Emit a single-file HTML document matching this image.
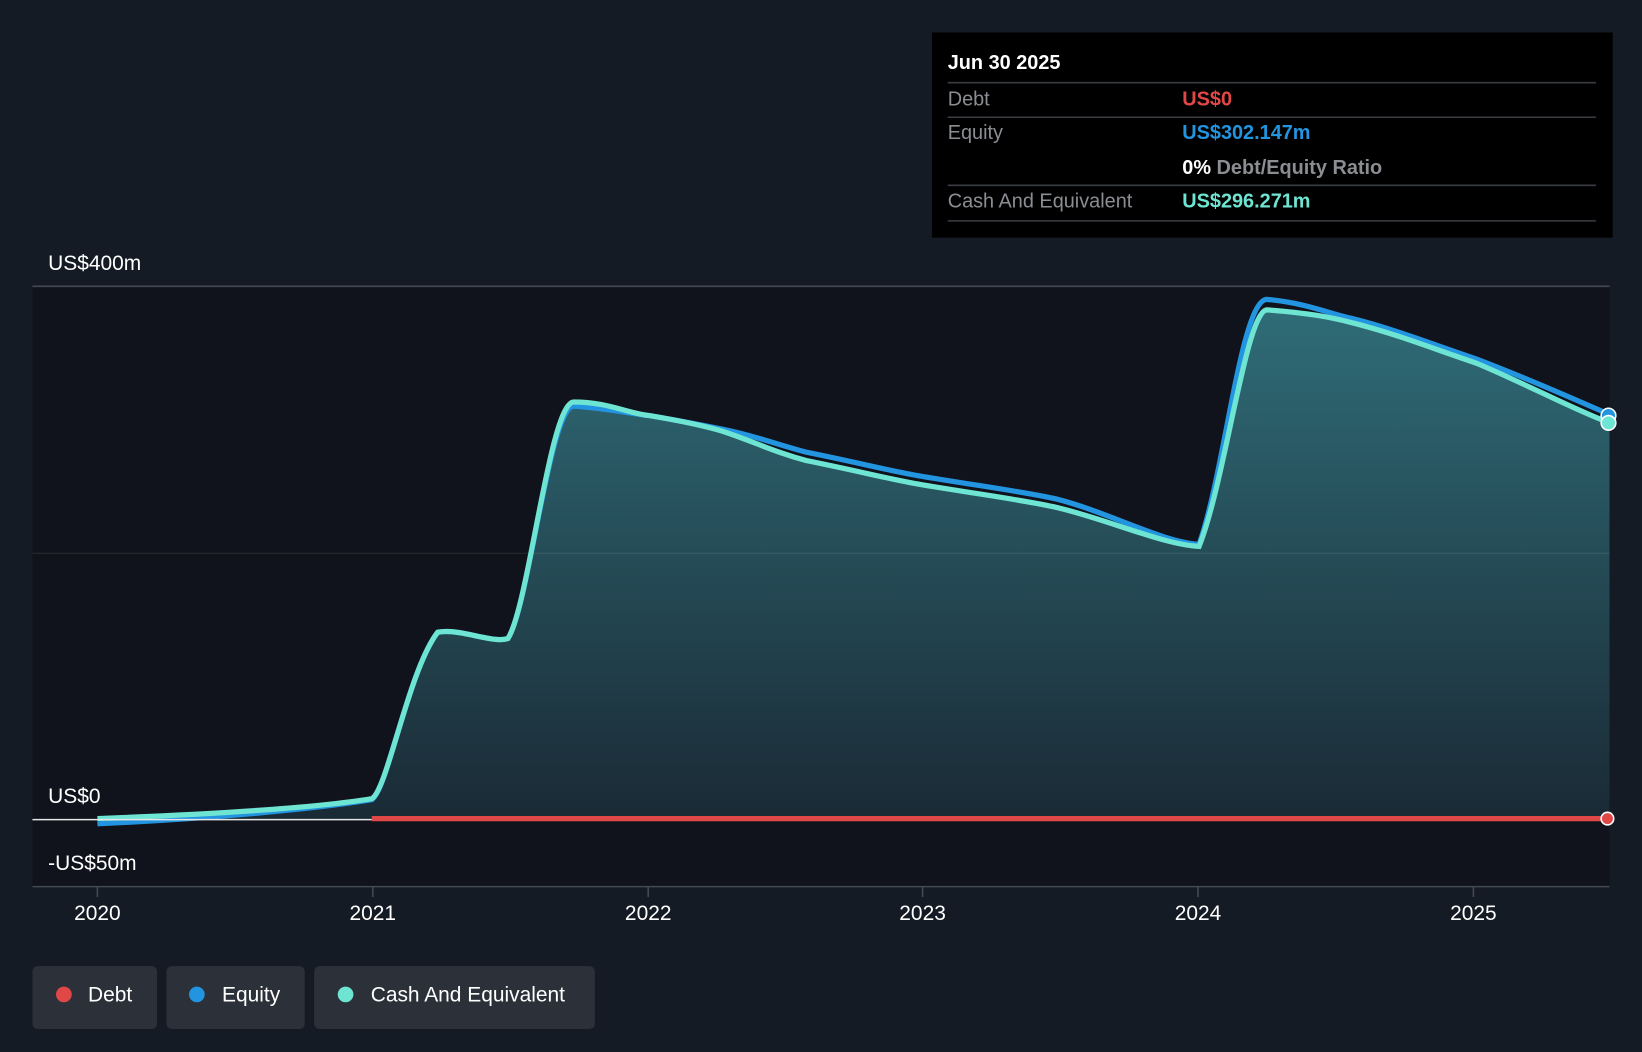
<!DOCTYPE html>
<html><head><meta charset="utf-8">
<style>
html,body{margin:0;padding:0;background:#151b24;width:1642px;height:1052px;overflow:hidden}
svg{display:block}
text{font-family:"Liberation Sans",sans-serif}
</style></head>
<body>
<svg width="1642" height="1052" viewBox="0 0 1568 1005" preserveAspectRatio="none">
<defs>
<linearGradient id="g" x1="0" y1="0" x2="0" y2="1">
<stop offset="0" stop-color="#2f6c77"/>
<stop offset="1" stop-color="#1a2a35"/>
</linearGradient>
<clipPath id="c"><rect x="31" y="250" width="1506" height="600"/></clipPath>
</defs>
<rect width="1568" height="1005" fill="#151b24"/>
<rect x="31" y="273" width="1506" height="574" fill="#10131b"/>
<line x1="31" y1="273.5" x2="1537" y2="273.5" stroke="#444a53" stroke-width="1.5"/>
<g clip-path="url(#c)">
<path d="M93 782 C200 778 300 772 355 763 C370 755 390 640 418 604 C440 600 470 615 485 610 C505 580 525 390 548 384 C580 384 600 395 620 397 C650 402 670 406 690 412 C720 422 740 432 770 440 C820 450 850 458 880 463 C940 473 980 478 1010 485 C1060 497 1110 520 1145 522 C1170 460 1190 296 1210 296 C1250 299 1270 303 1290 308 C1330 318 1360 330 1410 347 C1460 368 1500 390 1537 404 L1537 783 L93 783 Z" fill="url(#g)"/>
<line x1="31" y1="528.5" x2="1537" y2="528.5" stroke="#ffffff" stroke-opacity="0.1" stroke-width="1"/>
<path d="M93 787 C200 782 300 773 355 764 C370 755 390 640 418 604 C440 600 470 615 485 610 C505 580 525 388 548 388 C580 390 600 395 620 397 C650 402 670 406 690 410 C720 416 740 424 770 432 C820 442 850 450 880 455 C940 465 980 470 1010 477 C1060 490 1110 518 1145 520 C1170 450 1185 286 1210 286 C1250 290 1270 300 1290 304 C1330 314 1360 326 1410 343 C1460 362 1500 380 1537 396" fill="none" stroke="#2394df" stroke-width="5"/>
<path d="M93 782 C200 778 300 772 355 763 C370 755 390 640 418 604 C440 600 470 615 485 610 C505 580 525 384 548 384 C580 384 600 395 620 397 C650 402 670 406 690 412 C720 422 740 432 770 440 C820 450 850 458 880 463 C940 473 980 478 1010 485 C1060 497 1110 520 1145 522 C1170 460 1190 296 1210 296 C1250 299 1270 303 1290 308 C1330 318 1360 330 1410 347 C1460 368 1500 390 1537 404" fill="none" stroke="#6ee5d3" stroke-width="5"/>
</g>
<line x1="31" y1="783" x2="355" y2="783" stroke="#e6e6e6" stroke-width="1.5"/>
<line x1="355" y1="782" x2="1537" y2="782" stroke="#e04848" stroke-width="5"/>
<circle cx="1535" cy="782" r="6" fill="#e04848" stroke="#fff" stroke-width="1.5"/>
<circle cx="1536" cy="397" r="7" fill="#2394df" stroke="#fff" stroke-width="1.5"/>
<circle cx="1536" cy="404" r="7" fill="#6ee5d3" stroke="#fff" stroke-width="1.5"/>
<line x1="31" y1="847" x2="1537" y2="847" stroke="#444a53" stroke-width="1.5"/>
<g stroke="#444a53" stroke-width="1.5">
<line x1="93" y1="847" x2="93" y2="857"/><line x1="356" y1="847" x2="356" y2="857"/><line x1="619" y1="847" x2="619" y2="857"/>
<line x1="881" y1="847" x2="881" y2="857"/><line x1="1144" y1="847" x2="1144" y2="857"/><line x1="1407" y1="847" x2="1407" y2="857"/>
</g>
<g fill="#fff" font-size="20">
<text x="46" y="258">US$400m</text>
<text x="46" y="767">US$0</text>
<text x="46" y="831">-US$50m</text>
</g>
<g fill="#fff" font-size="20" text-anchor="middle">
<text x="93" y="879">2020</text><text x="356" y="879">2021</text><text x="619" y="879">2022</text>
<text x="881" y="879">2023</text><text x="1144" y="879">2024</text><text x="1407" y="879">2025</text>
</g>
<rect x="890" y="31" width="650" height="196" fill="#000"/>
<g font-size="19">
<text x="905" y="66" fill="#fff" font-weight="600">Jun 30 2025</text>
<text x="905" y="101" fill="#8a8d92">Debt</text>
<text x="1129" y="101" fill="#e04848" font-weight="600">US$0</text>
<text x="905" y="133" fill="#8a8d92">Equity</text>
<text x="1129" y="133" fill="#2394df" font-weight="600">US$302.147m</text>
<text x="1129" y="166" fill="#fff" font-weight="600">0% <tspan fill="#8a8d92">Debt/Equity Ratio</tspan></text>
<text x="905" y="198" fill="#8a8d92">Cash And Equivalent</text>
<text x="1129" y="198" fill="#6ee5d3" font-weight="600">US$296.271m</text>
</g>
<g stroke="#3a3d42" stroke-width="1.5">
<line x1="905" y1="79" x2="1524" y2="79"/><line x1="905" y1="112" x2="1524" y2="112"/>
<line x1="905" y1="177" x2="1524" y2="177"/><line x1="905" y1="211" x2="1524" y2="211"/>
</g>
<rect x="31" y="923" width="119" height="60" rx="5" fill="#2b3039"/>
<rect x="159" y="923" width="132" height="60" rx="5" fill="#2b3039"/>
<rect x="300" y="923" width="268" height="60" rx="5" fill="#2b3039"/>
<circle cx="61" cy="950" r="7.5" fill="#e04848"/>
<circle cx="188" cy="950" r="7.5" fill="#2394df"/>
<circle cx="330" cy="950" r="7.5" fill="#6ee5d3"/>
<g fill="#fff" font-size="20">
<text x="84" y="957">Debt</text><text x="212" y="957">Equity</text><text x="354" y="957">Cash And Equivalent</text>
</g>
</svg>
</body></html>
